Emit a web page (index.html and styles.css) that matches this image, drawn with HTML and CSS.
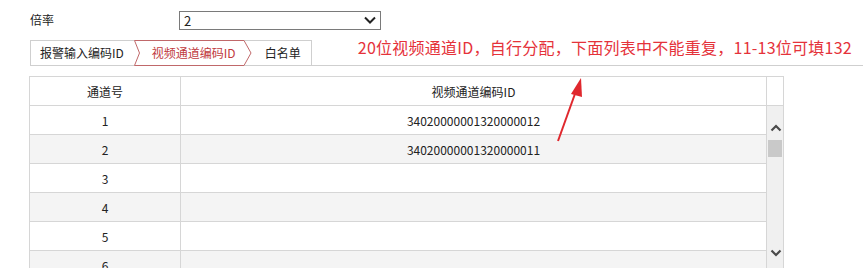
FILE: index.html
```html
<!DOCTYPE html>
<html lang="zh-CN">
<head>
  <meta charset="UTF-8" />
  <title>视频通道编码</title>
  <link rel="stylesheet" href="styles.css">
</head>
<body>

  <!-- Rate row -->
  <div class="rate-row">
    <span class="rate-label">倍率</span>
    <div class="select">
      <span>2</span>
      <svg class="select-arrow" width="12" height="8" viewBox="0 0 12 8">
        <path d="M1 1.5 L6 6.5 L11 1.5" fill="none" stroke="#222" stroke-width="2"/>
      </svg>
    </div>
  </div>

  <!-- Tabs -->
  <div class="tab-bar">
    <div class="tabs">
      <div class="tab">报警输入编码ID</div>
      <div class="tab active">
        <svg class="chevron" width="118" height="26" viewBox="0 0 118 26">
          <path d="M0.5 0.5 L110 0.5 L117 13 L110 25.5 L0.5 25.5 L5.5 13 Z" fill="#fff" stroke="#c0686a" stroke-width="1"/>
        </svg>
        <span>视频通道编码ID</span>
      </div>
      <div class="tab last">白名单</div>
    </div>
    <div class="note">20位视频通道ID，自行分配，下面列表中不能重复，11-13位可填132</div>
  </div>

  <!-- Channel list -->
  <div class="list">
    <div class="list-head">
      <div class="cell num">通道号</div>
      <div class="cell code">视频通道编码ID</div>
      <div class="cell gap"></div>
    </div>
    <div class="list-body">
      <div class="rows" id="rows"></div>
      <div class="scroll">
        <svg class="scroll-up" width="12" height="8" viewBox="0 0 12 8">
          <path d="M1.5 6.5 L6 2 L10.5 6.5" fill="none" stroke="#4a4a4a" stroke-width="2.2"/>
        </svg>
        <div class="thumb"></div>
        <svg class="scroll-down" width="12" height="8" viewBox="0 0 12 8">
          <path d="M1.5 1.5 L6 6 L10.5 1.5" fill="none" stroke="#4a4a4a" stroke-width="2.2"/>
        </svg>
      </div>
    </div>
  </div>

  <!-- Annotation arrow -->
  <svg class="pointer" width="40" height="70" viewBox="0 0 40 70">
    <path d="M4 66 L22 16" stroke="#e0282e" stroke-width="2" fill="none"/>
    <path d="M27 3 L17 19 L28 22 Z" fill="#e0282e"/>
  </svg>

  <script>
    const channels = [
      { no: 1, id: "34020000001320000012" },
      { no: 2, id: "34020000001320000011" },
      { no: 3, id: "" },
      { no: 4, id: "" },
      { no: 5, id: "" },
      { no: 6, id: "" }
    ];

    document.getElementById("rows").innerHTML = channels.map(c =>
      `<div class="row"><div class="cell num">${c.no}</div><div class="cell code">${c.id}</div></div>`
    ).join("");
  </script>

</body>
</html>
```

FILE: styles.css
```css
* {
  box-sizing: border-box;
}
body, html {
  margin: 0;
  padding: 0;
  background: #ffffff;
  font-family: "Noto Sans CJK SC", "Microsoft YaHei", sans-serif;
  font-size: 12px;
  color: #222;
  overflow: hidden;
}

.rate-row {
  display: flex;
  align-items: center;
  height: 30px;
  padding: 10px 0 0 30px;
}
.rate-label {
  width: 149px;
  line-height: 18px;
}
.select {
  width: 202px;
  height: 19px;
  border: 1px solid #7a7a7a;
  display: flex;
  align-items: center;
  justify-content: space-between;
  padding: 0 4px 0 4px;
  font-size: 13px;
}

.tab-bar {
  display: flex;
  align-items: flex-end;
  margin: 10px 0 0 30px;
  border-bottom: 1px solid #cfcfcf;
  height: 26px;
}
.tabs {
  display: flex;
  border: 1px solid #cfcfcf;
  border-bottom: none;
  height: 25px;
}
.tab {
  line-height: 24px;
  padding: 0 10px 0 9px;
  white-space: nowrap;
}
.tab.active {
  position: relative;
  width: 117px;
  padding: 0 0 0 18px;
  color: #c0393d;
}
.tab.active span {
  position: relative;
}
.chevron {
  position: absolute;
  left: 0;
  top: -1px;
}
.tab.last {
  padding: 0 10px 0 14px;
}
.note {
  margin-left: 46px;
  align-self: flex-start;
  margin-top: -4px;
  color: #e5323a;
  font-size: 16px;
  line-height: 22px;
  letter-spacing: 0.25px;
  white-space: nowrap;
}

.list {
  margin: 10px 0 0 29px;
  width: 755px;
  border-left: 1px solid #d6d6d6;
  border-top: 1px solid #d6d6d6;
}
.list-head {
  display: flex;
  height: 29px;
  border-bottom: 1px solid #d6d6d6;
}
.cell {
  display: flex;
  align-items: center;
  justify-content: center;
  border-right: 1px solid #d6d6d6;
}
.cell.num {
  width: 151px;
}
.cell.code {
  width: 586px;
}
.cell.gap {
  width: 17px;
}

.list-body {
  display: flex;
}
.rows {
  width: 737px;
}
.row {
  display: flex;
  height: 29px;
  border-bottom: 1px solid #d6d6d6;
}
.row:nth-child(even) {
  background: #f4f4f4;
}

.scroll {
  position: relative;
  width: 17px;
  height: 170px;
  background: #f0f0f0;
  border-right: 1px solid #d6d6d6;
}
.scroll-up {
  position: absolute;
  left: 3px;
  top: 18px;
}
.thumb {
  position: absolute;
  left: 1px;
  top: 34px;
  width: 14px;
  height: 17px;
  background: #c9c9c9;
}
.scroll-down {
  position: absolute;
  left: 3px;
  top: 143px;
}

.pointer {
  position: absolute;
  left: 554px;
  top: 75px;
}
```
